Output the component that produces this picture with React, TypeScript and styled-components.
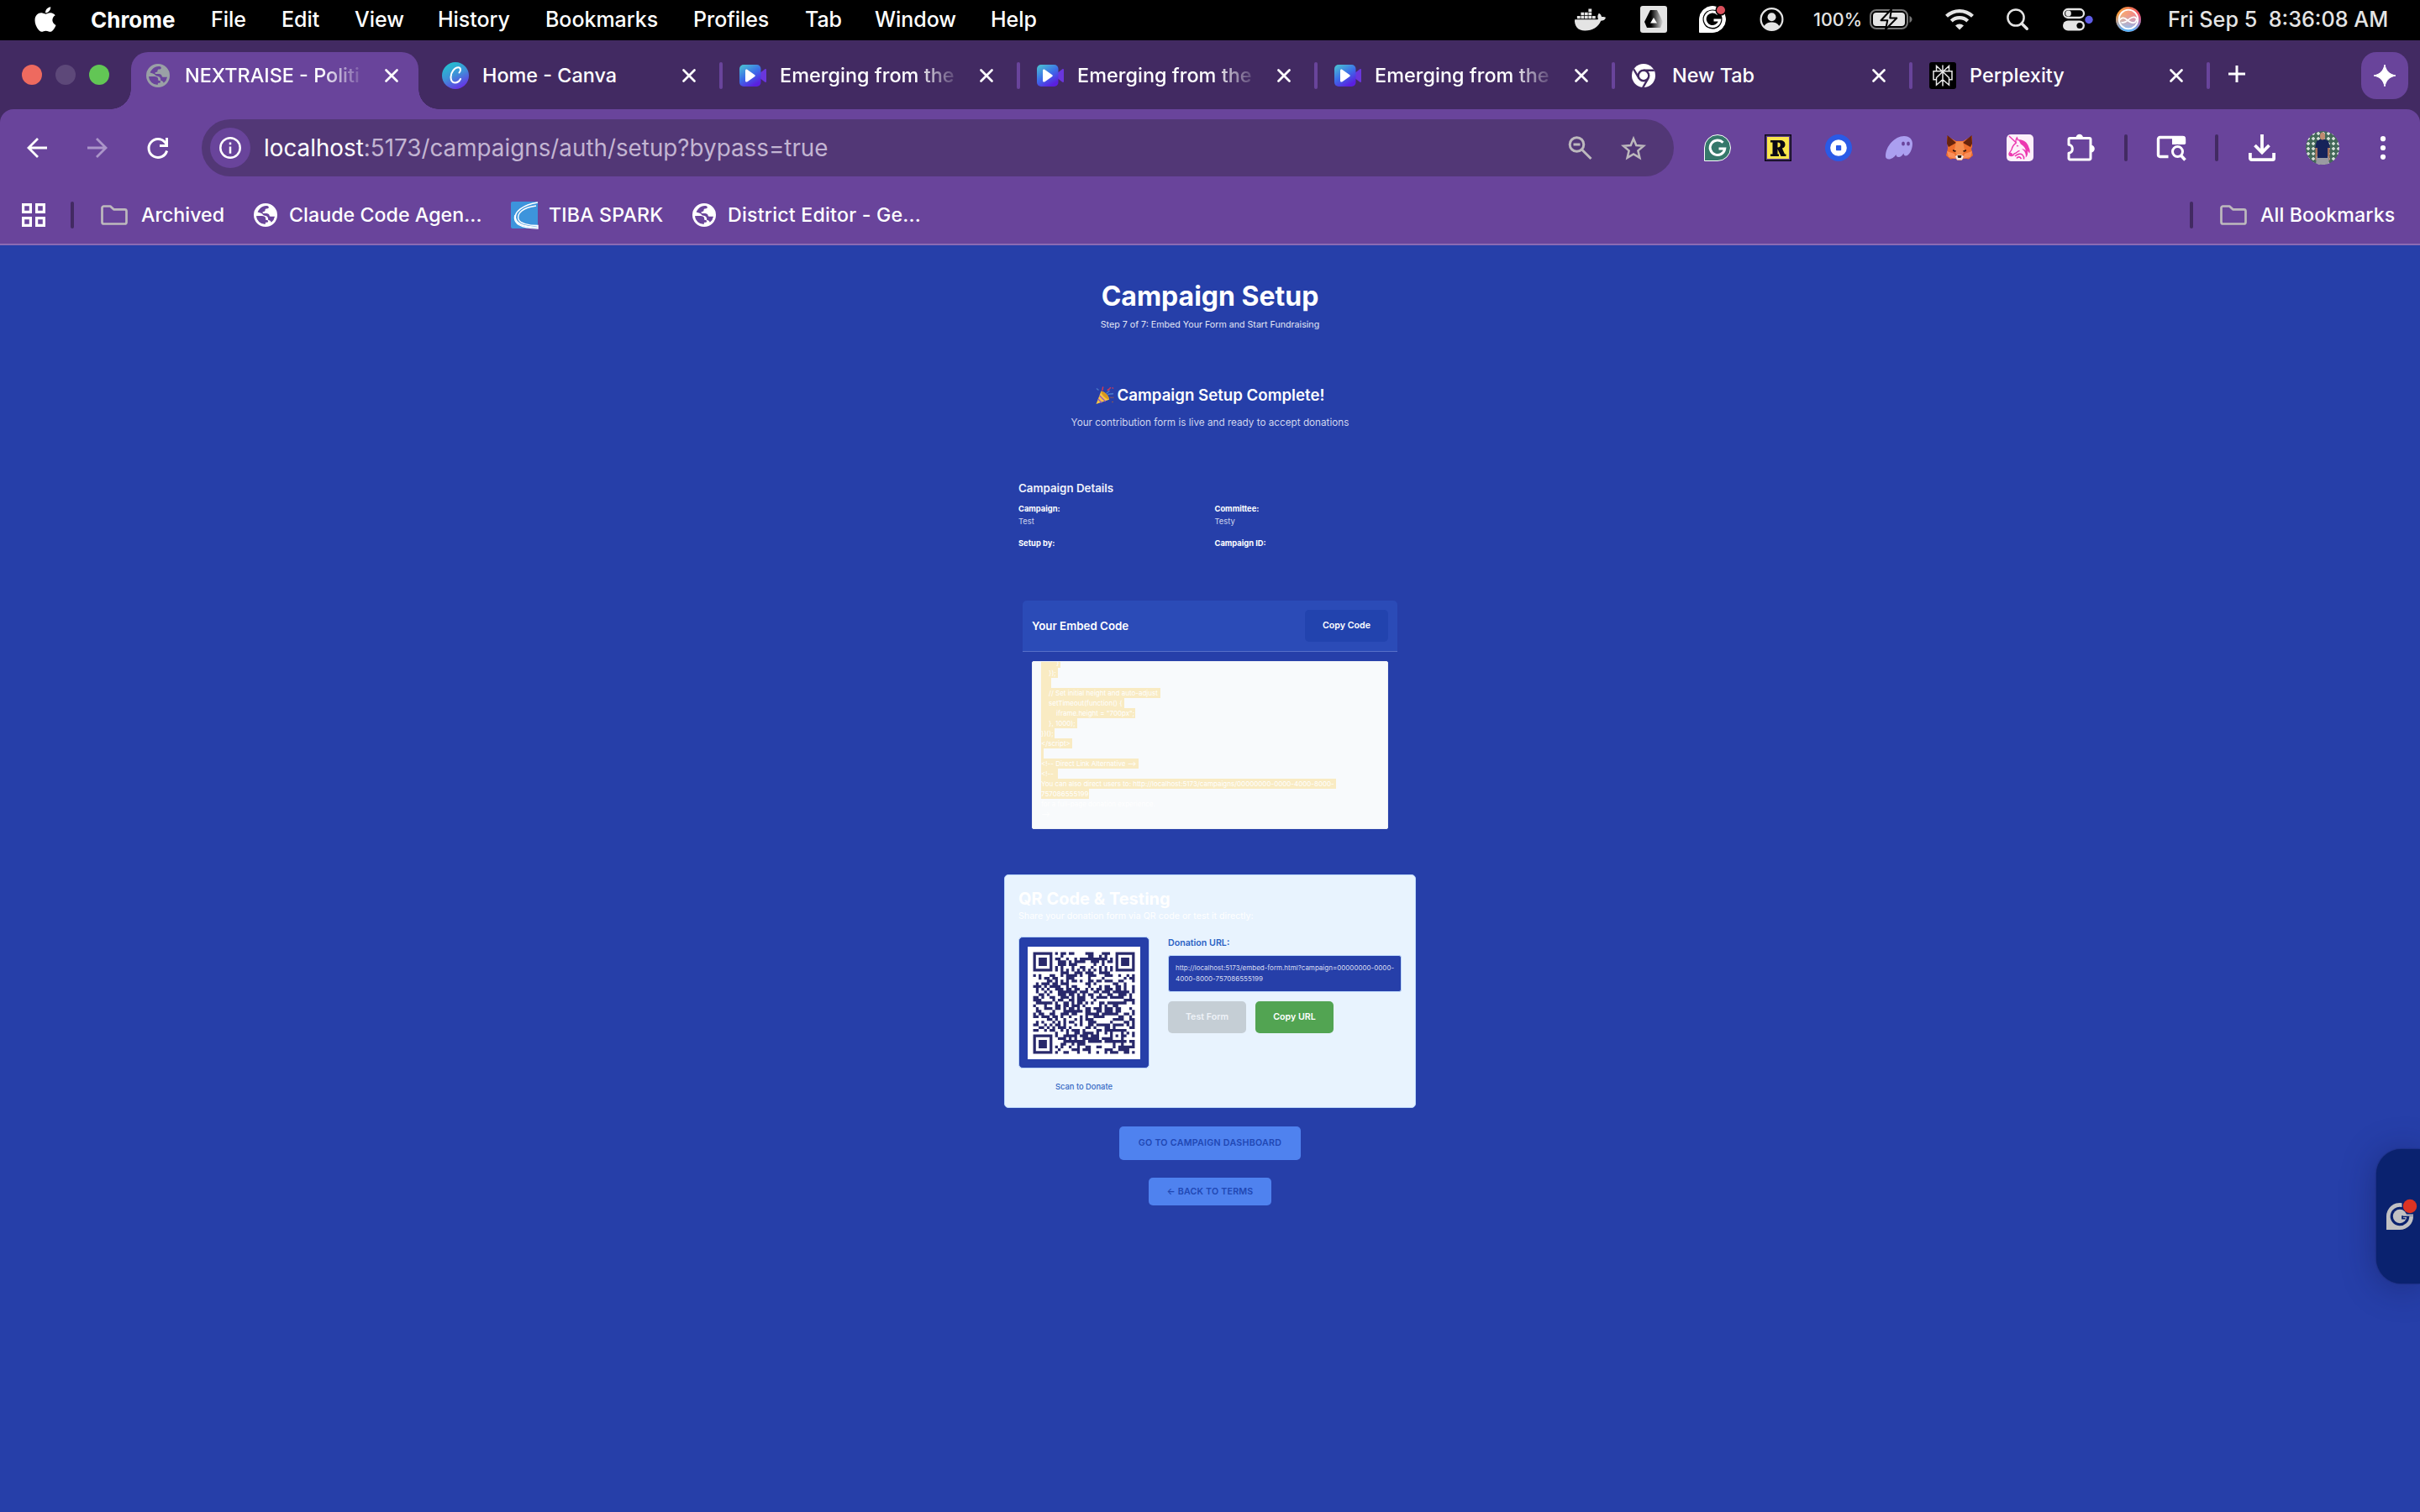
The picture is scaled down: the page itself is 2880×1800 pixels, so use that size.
import React from "react";
import styled, { createGlobalStyle } from "styled-components";
import { FaApple, FaDocker } from "react-icons/fa";

const URL_TEXT = "http://localhost:5173/embed-form.html?campaign=";
const ID_HEAD = "00000000-0000-4000-8000-";
const ID_TAIL = "757086555199";

/* ---------- QR code (version 5, level M, mask 1) ---------- */
const ALNUM = "0123456789ABCDEFGHIJKLMNOPQRSTUVWXYZ $%*+-./:";
const SIZE = 37;
const FORMAT = 0b101000100100101;

function buildBits(): number[] {
  const bits: number[] = [];
  const put = (v: number, n: number) => {
    for (let i = n - 1; i >= 0; i--) bits.push((v >> i) & 1);
  };
  put(4, 4);
  put(URL_TEXT.length, 8);
  for (const c of URL_TEXT) put(c.charCodeAt(0), 8);
  put(2, 4);
  put(ID_HEAD.length, 9);
  for (let i = 0; i < ID_HEAD.length; i += 2)
    put(ALNUM.indexOf(ID_HEAD[i]) * 45 + ALNUM.indexOf(ID_HEAD[i + 1]), 11);
  put(1, 4);
  put(ID_TAIL.length, 10);
  for (let i = 0; i < ID_TAIL.length; i += 3) put(Number(ID_TAIL.slice(i, i + 3)), 10);
  put(0, 4);
  while (bits.length % 8) bits.push(0);
  let pad = 0xec;
  while (bits.length < 86 * 8) {
    put(pad, 8);
    pad = pad === 0xec ? 0x11 : 0xec;
  }
  return bits;
}

function gmul(a: number, b: number) {
  let r = 0;
  while (b) {
    if (b & 1) r ^= a;
    a <<= 1;
    if (a & 256) a ^= 0x11d;
    b >>= 1;
  }
  return r;
}

function ecc(data: number[], n: number): number[] {
  let gen = [1];
  let root = 1;
  for (let i = 0; i < n; i++) {
    const next = new Array(gen.length + 1).fill(0);
    gen.forEach((g, j) => {
      next[j] ^= g;
      next[j + 1] ^= gmul(g, root);
    });
    gen = next;
    root = gmul(root, 2);
  }
  const rem = [...data, ...new Array(n).fill(0)];
  for (let i = 0; i < data.length; i++) {
    const f = rem[i];
    if (f) gen.forEach((g, j) => (rem[i + j] ^= gmul(g, f)));
  }
  return rem.slice(data.length);
}

function makeQr(): boolean[][] {
  const bits = buildBits();
  const bytes: number[] = [];
  for (let i = 0; i < bits.length; i += 8) bytes.push(parseInt(bits.slice(i, i + 8).join(""), 2));
  const blocks = [bytes.slice(0, 43), bytes.slice(43)];
  const eccs = blocks.map((b) => ecc(b, 24));
  const out: number[] = [];
  for (let i = 0; i < 43; i++) blocks.forEach((b) => out.push(b[i]));
  for (let i = 0; i < 24; i++) eccs.forEach((b) => out.push(b[i]));
  const m: (boolean | null)[][] = Array.from({ length: SIZE }, () => new Array(SIZE).fill(null));
  const finder = (r0: number, c0: number) => {
    for (let r = -1; r <= 7; r++)
      for (let c = -1; c <= 7; c++) {
        const y = r0 + r;
        const x = c0 + c;
        if (y < 0 || x < 0 || y >= SIZE || x >= SIZE) continue;
        const d = Math.max(Math.abs(r - 3), Math.abs(c - 3));
        m[y][x] = d !== 2 && d !== 4;
      }
  };
  finder(0, 0);
  finder(0, SIZE - 7);
  finder(SIZE - 7, 0);
  for (let r = -2; r <= 2; r++)
    for (let c = -2; c <= 2; c++) m[30 + r][30 + c] = Math.max(Math.abs(r), Math.abs(c)) !== 1;
  for (let i = 8; i < SIZE - 8; i++) {
    m[6][i] = i % 2 === 0;
    m[i][6] = i % 2 === 0;
  }
  for (let i = 0; i < 15; i++) {
    const b = ((FORMAT >> i) & 1) === 1;
    if (i < 6) m[i][8] = b;
    else if (i < 8) m[i + 1][8] = b;
    else m[SIZE - 15 + i][8] = b;
    if (i < 8) m[8][SIZE - i - 1] = b;
    else if (i < 9) m[8][7] = b;
    else m[8][14 - i] = b;
  }
  m[SIZE - 8][8] = true;
  let k = 0;
  let up = true;
  for (let col = SIZE - 1; col > 0; col -= 2) {
    if (col === 6) col--;
    for (let i = 0; i < SIZE; i++) {
      const row = up ? SIZE - 1 - i : i;
      for (const x of [col, col - 1]) {
        if (m[row][x] !== null) continue;
        const bit = k < out.length * 8 ? (out[k >> 3] >> (7 - (k & 7))) & 1 : 0;
        m[row][x] = (bit === 1) !== (row % 2 === 0);
        k++;
      }
    }
    up = !up;
  }
  return m as boolean[][];
}

const QR_PATH = makeQr()
  .map((row, y) => row.map((on, x) => (on ? `M${x + 2} ${y + 2}h1v1h-1z` : "")).join(""))
  .join("");

const QrSvg = () => (
  <svg width="134" height="134" viewBox="0 0 41 41">
    <rect width="41" height="41" fill="#fff" />
    <path d={QR_PATH} fill="#29296b" />
  </svg>
);

/* ---------- styles ---------- */
const Global = createGlobalStyle`
  * { box-sizing: border-box; }
  html, body { margin: 0; padding: 0; }
  body { font-family: Inter, "Liberation Sans", sans-serif; background: #263fa9; overflow: hidden; }
  svg { display: block; flex: none; overflow: visible; }
`;

const Screen = styled.div`
  width: 2880px;
  height: 1800px;
  display: flex;
  flex-direction: column;
  position: relative;
  overflow: hidden;
`;

const MenuBar = styled.header`
  height: 48px;
  background: #000;
  display: flex;
  align-items: center;
  padding: 0 38px 2px 37px;
  color: #fff;
  font-size: 25px;
`;
const MenuItem = styled.span<{ $w: number; $bold?: boolean }>`
  width: ${(p) => p.$w}px;
  font-size: ${(p) => (p.$bold ? 26 : 25)}px;
  font-weight: ${(p) => (p.$bold ? 700 : 500)};
  letter-spacing: ${(p) => (p.$bold ? 0 : -0.05)}px;
  white-space: nowrap;
`;
const AppleSlot = styled.span`
  width: 71px;
  display: flex;
`;
const Status = styled.div`
  margin-left: auto;
  display: flex;
  align-items: center;
  color: #e4e4e4;
`;
const StatusItem = styled.span<{ $w: number; $gap: number; $size?: number }>`
  width: ${(p) => p.$w}px;
  margin-left: ${(p) => p.$gap}px;
  font-size: ${(p) => p.$size ?? 25.2}px;
  font-weight: 500;
  white-space: pre;
  display: flex;
`;

const TabStrip = styled.div`
  height: 82px;
  background: #422a62;
  display: flex;
  padding-right: 14px;
`;
const Lights = styled.div`
  width: 150px;
  padding: 29px 0 0 26px;
  display: flex;
  gap: 16px;
`;
const Light = styled.i<{ $c: string }>`
  width: 24px;
  height: 24px;
  border-radius: 50%;
  background: ${(p) => p.$c};
`;
const Tab = styled.div<{ $active?: boolean }>`
  width: 354px;
  height: 68px;
  margin-top: 14px;
  display: flex;
  align-items: center;
  position: relative;
  padding: 0 0 12px 22px;
  ${(p) =>
    p.$active &&
    `
    width: 342px; margin-left: 6px; margin-right: 6px; padding-left: 18px;
    background: #69449b; border-radius: 20px 20px 0 0;
    &::before, &::after {
      content: ""; position: absolute; bottom: 0; width: 24px; height: 24px;
    }
    &::before { left: -24px; background: radial-gradient(circle at 0 0, transparent 23.5px, #69449b 24px); }
    &::after { right: -24px; background: radial-gradient(circle at 100% 0, transparent 23.5px, #69449b 24px); }
  `}
`;
const Fav = styled.span<{ $w?: number }>`
  width: ${(p) => p.$w ?? 32}px;
  display: flex;
`;
const TabTitle = styled.span<{ $fade?: boolean; $ml?: number; $ls?: number }>`
  margin-left: ${(p) => p.$ml ?? 16}px;
  font-size: 23.4px;
  font-weight: 500;
  line-height: 32px;
  color: #fff;
  letter-spacing: ${(p) => p.$ls ?? 0}px;
  white-space: nowrap;
  ${(p) => p.$fade && `mask-image: linear-gradient(90deg, #000 calc(100% - 46px), rgba(0,0,0,.15));`}
`;
const TabClose = styled.span<{ $mr?: number }>`
  margin-left: auto;
  margin-right: ${(p) => p.$mr ?? 30}px;
  display: flex;
`;
const Sep = styled.i`
  width: 4px;
  height: 32px;
  margin: 26px -2px 0;
  border-radius: 2px;
  background: #69449b;
`;
const PlusSlot = styled.span`
  margin: 30px 0 0 24px;
  display: flex;
`;
const SparkButton = styled.span`
  margin: 14px 0 0 auto;
  width: 56px;
  height: 56px;
  border-radius: 18px;
  background: #69449b;
  display: grid;
  place-items: center;
`;

const ToolbarBack = styled.div`
  background: #422a62;
`;
const Toolbar = styled.div`
  height: 92px;
  background: #69449b;
  border-radius: 16px 16px 0 0;
  display: flex;
  align-items: center;
  padding-left: 8px;
`;
const Slot = styled.span<{ $w?: number }>`
  width: ${(p) => p.$w ?? 72}px;
  height: 40px;
  display: grid;
  place-items: center;
`;
const Omnibox = styled.div`
  width: 1752px;
  height: 68px;
  margin-left: 16px;
  margin-right: 16px;
  border-radius: 34px;
  background: #523776;
  display: flex;
  align-items: center;
  padding: 0 33px 0 10px;
`;
const InfoChip = styled.span`
  width: 48px;
  height: 48px;
  border-radius: 50%;
  background: #69449b;
  display: grid;
  place-items: center;
`;
const Address = styled.span`
  margin-left: 16px;
  font-size: 27.8px;
  color: #c3b5d2;
  white-space: nowrap;
  flex: 1;
  b { color: #fff; font-weight: 400; }
`;
const OmniIcons = styled.span`
  display: flex;
  gap: 34px;
  align-items: center;
`;
const VLine = styled.i`
  width: 4px;
  height: 32px;
  border-radius: 2px;
  background: #422a62;
`;
const Bookmarks = styled.div`
  height: 70px;
  background: #69449b;
  border-bottom: 2px solid #8b6ab3;
  display: flex;
  align-items: center;
  padding: 0 30px 1px 26px;
  color: #fff;
  font-size: 23.2px;
  font-weight: 500;
`;
const Mark = styled.span<{ $gap: number; $w?: number; $inner?: number; $ls?: number }>`
  margin-left: ${(p) => p.$gap}px;
  width: ${(p) => (p.$w ? `${p.$w}px` : "auto")};
  letter-spacing: ${(p) => p.$ls ?? 0}px;
  display: flex;
  align-items: center;
  gap: ${(p) => p.$inner ?? 14}px;
  white-space: nowrap;
`;
const PushRight = styled.span`
  margin-left: auto;
  display: flex;
  align-items: center;
`;

const Page = styled.main`
  flex: 1;
  background: #263fa9;
  display: flex;
  flex-direction: column;
  align-items: center;
  color: #fff;
  padding-top: 41px;
`;
const Line = styled.div<{ $h: number; $mt?: number; $s: number; $w?: number; $c?: string }>`
  height: ${(p) => p.$h}px;
  line-height: ${(p) => p.$h}px;
  margin-top: ${(p) => p.$mt ?? 0}px;
  font-size: ${(p) => p.$s}px;
  font-weight: ${(p) => p.$w ?? 400};
  color: ${(p) => p.$c ?? "#fff"};
  white-space: nowrap;
`;
const Heading = styled(Line)`
  display: flex;
  align-items: center;
  gap: 4px;
`;
const Details = styled.section`
  width: 456px;
  margin-top: 60px;
`;
const DetailGrid = styled.div`
  display: grid;
  grid-template-columns: 1fr 1fr;
  column-gap: 11px;
  grid-template-rows: 41px 14px;
  margin-top: 8px;
`;
const EmbedHead = styled.section`
  width: 446px;
  height: 61px;
  margin-top: 61px;
  background: #2b4bb7;
  border-bottom: 1px solid #5770c8;
  border-radius: 5px 5px 0 0;
  display: flex;
  align-items: center;
  justify-content: space-between;
  padding: 0 11px;
`;
const Button = styled.button<{ $w: number; $h?: number; $bg: string; $fg?: string; $ls?: number; $mt?: number }>`
  width: ${(p) => p.$w}px;
  height: ${(p) => p.$h ?? 38}px;
  margin: ${(p) => p.$mt ?? 0}px 0 0;
  padding: 0 0 1px;
  border: 0;
  border-radius: 5px;
  background: ${(p) => p.$bg};
  color: ${(p) => p.$fg ?? "#fff"};
  font: 600 10.67px Inter, sans-serif;
  letter-spacing: ${(p) => p.$ls ?? 0}px;
  white-space: nowrap;
`;
const CodeBox = styled.div`
  width: 424px;
  height: 200px;
  margin-top: 11px;
  border-radius: 2px;
  border: 1px solid #eef0f5;
  background: #f8fafc;
  padding: 0 10px 11px;
  display: flex;
  flex-direction: column;
  justify-content: flex-end;
  overflow: hidden;
`;
const CodeLine = styled.div`
  font-size: 8px;
  line-height: 12px;
  height: 12px;
  color: #fff;
  white-space: pre;
  flex: none;
  display: flex;
`;
const Sel = styled.span<{ $w: number }>`
  width: ${(p) => p.$w}px;
  background: #f9ebc3;
`;
const Card = styled.section`
  width: 490px;
  height: 278px;
  margin-top: 54px;
  background: #e8f3fe;
  border: 1px solid #bbd6fa;
  border-radius: 5px;
  padding: 16px;
`;
const CardBody = styled.div`
  display: flex;
  gap: 22px;
  margin-top: 15px;
`;
const QrCol = styled.div`
  width: 156px;
  display: flex;
  flex-direction: column;
  align-items: center;
`;
const QrFrame = styled.div`
  width: 156px;
  height: 157px;
  border: 1px solid #bbd6fa;
  border-radius: 5px;
  background: #263fa9;
  display: grid;
  place-items: center;
`;
const UrlCol = styled.div`
  width: 278px;
`;
const UrlBox = styled.div`
  width: 278px;
  height: 44px;
  margin-top: 6px;
  border: 1px solid #bbd6fa;
  border-radius: 3px;
  background: #263fa9;
  color: #d9def1;
  font-size: 8px;
  line-height: 12.8px;
  padding: 8px;
  white-space: nowrap;
`;
const Row = styled.div`
  display: flex;
  gap: 11px;
  margin-top: 11px;
`;
const Assistant = styled.aside`
  position: absolute;
  right: 0;
  top: 1368px;
  width: 52px;
  height: 160px;
  border-radius: 30px 0 0 30px;
  background: #0a226f;
  box-shadow: 0 4px 40px rgba(20, 25, 80, 0.45), 0 0 2px rgba(10, 20, 60, 0.7);
  padding: 64px 0 0 12px;
`;

/* ---------- icons ---------- */
const Globe = ({ c }: { c: string }) => (
  <svg width="28" height="28" viewBox="0 0 28 28">
    <path
      fillRule="evenodd"
      fill={c}
      d="M14 0a14 14 0 1 1 0 28a14 14 0 0 1 0-28zM2.900 15.200c3.500-.2 7.500-.2 9.300.2c1.600.5 2 1.600 2 3.300c0 .8.300 1.300 1.200 1.300c1.200 0 1.600.5 1.600 1.500c0 1-.6 1.300-2 1.300c-1 0-1.300.6-1.300 2.300A11.100 11.100 0 0 1 2.900 15.200zM4.600 10.600C6 7 9.500 3.200 14.500 2.900c1.800 0 3 .4 3.300 1.600c.2 1.400-.9 2-2.500 2c-1.300 0-1.800.6-1.800 1.800c0 1-.6 1.600-1.800 1.600c-1 0-1.300.4-1.100 1.300c.2.8.8.9 2.700.9c3.500 0 5 .6 5.300 2.300c.2 1 .8 1.300 2.300 1.300h4.100a11.100 11.100 0 0 1-4.200 7c-.7-1.700-1.600-2.700-3.500-2.700c0-3.500-1.300-4.900-3.900-5.200c-2.500-.3-2.900-2.700-5.500-3.200z"
    />
  </svg>
);
const Cross = () => (
  <svg width="16" height="16" viewBox="0 0 16 16" stroke="#fff" strokeWidth="2.700" strokeLinecap="round">
    <path d="M1.500 1.500l13 13M14.500 1.500l-13 13" />
  </svg>
);
const Canva = () => (
  <svg width="32" height="32" viewBox="0 0 32 32">
    <defs>
      <linearGradient id="cv" x1=".2" y1="0" x2=".7" y2="1">
        <stop offset="0" stopColor="#21c6cf" />
        <stop offset=".5" stopColor="#3f8fd8" />
        <stop offset="1" stopColor="#6a2be6" />
      </linearGradient>
    </defs>
    <circle cx="16" cy="16" r="16" fill="url(#cv)" />
    <path d="M20.500 12.500c1.800-1.500 2.500-6-1-6.200c-4.500-.2-9 6-9 11.500c0 4.500 2.300 6.600 5 6.600c3 0 5.400-2 6.500-4.400" fill="none" stroke="#fff" strokeWidth="2" strokeLinecap="round" />
  </svg>
);
const Video = () => (
  <svg width="32" height="26" viewBox="0 0 32 26">
    <defs>
      <linearGradient id="vd" x1="0" y1="0" x2=".6" y2="1">
        <stop offset="0" stopColor="#4cc8d0" />
        <stop offset=".55" stopColor="#3c6fe8" />
        <stop offset="1" stopColor="#5a1fe0" />
      </linearGradient>
    </defs>
    <path d="M23 11l7-5.500c1-.8 2-.5 2 .8v13.500c0 1.300-1 1.600-2 .8L23 15z" fill="#6a36dc" />
    <rect width="25.500" height="26" rx="5" fill="url(#vd)" />
    <path d="M7 7.300c0-1.600 1.200-2.200 2.500-1.300l8.500 6c1 .7 1 1.500 0 2.200l-8.500 6c-1.300.9-2.500.2-2.500-1.300z" fill="#fff" />
  </svg>
);
const ChromeLogo = () => (
  <svg width="28" height="28" viewBox="0 0 28 28">
    <defs>
      <clipPath id="cl"><circle cx="14" cy="14" r="14" /></clipPath>
    </defs>
    <g clipPath="url(#cl)">
      <rect width="28" height="28" fill="#fff" />
      <circle cx="14" cy="14" r="6.300" fill="none" stroke="#422a62" strokeWidth="2.400" />
      <path d="M14 7.700h14M8.500 17.200L2 6M19.500 17.200L13 28.500" stroke="#422a62" strokeWidth="2.400" />
    </g>
  </svg>
);
const Perplexity = () => (
  <svg width="32" height="32" viewBox="0 0 32 32" fill="none" stroke="#e8e8e8" strokeWidth="1.500">
    <rect width="32" height="32" rx="3" fill="#000" stroke="none" />
    <path d="M16 3.500v25M8.500 10.800V4.500l7.500 7l7.500-7v6.300M8.500 10.800h15M8.500 10.800H5v10h3.500M23.500 10.800H27v10h-3.500M16 11.300l-7.500 7.200v8.700l7.500-6.500l7.500 6.500v-8.700z" />
  </svg>
);
const Folder = () => (
  <svg width="32" height="24" viewBox="0 0 32 24">
    <path d="M3.500 1.500h7.800l4 3.800h13.200a2 2 0 0 1 2 2v13.200a2 2 0 0 1-2 2h-25a2 2 0 0 1-2-2v-17a2 2 0 0 1 2-2z" fill="none" stroke="#bdb9bd" strokeWidth="2.700" strokeLinejoin="round" />
  </svg>
);
const GDrop = ({ drop, hole, edge, badge }: { drop: string; hole: string; edge?: string; badge?: string }) => (
  <svg width="32" height="32" viewBox="0 0 32 32" fill="none">
    <path d="M.5 31.500V16A15.500 15.500 0 1 1 16 31.500z" fill={drop} stroke={edge ?? drop} />
    <circle cx="16" cy="16" r="11.500" fill={hole} />
    <path d="M22.500 9.800A8.800 8.800 0 1 0 24.700 17H17.500" stroke="#fff" strokeWidth="3" />
    {badge && <circle cx="26" cy="5" r="5.800" fill={badge} stroke={hole} strokeWidth="1.500" />}
  </svg>
);
const GFloat = () => (
  <svg width="32" height="32" viewBox="0 0 32 32" fill="none">
    <path d="M0 32V16A16 16 0 0 1 18.500.2V5A11.300 11.300 0 1 0 27.300 16H32A16 16 0 0 1 16 32z" fill="#c1c1c3" />
    <circle cx="16" cy="16" r="8.200" fill="#c1c1c3" />
    <path d="M26 16.200h-7v2.400h3.500" stroke="#0a226f" strokeWidth="1.800" />
    <path d="M20 14.600h12" stroke="#c1c1c3" strokeWidth="2" />
    <circle cx="28" cy="4" r="8.200" fill="#dc3323" />
  </svg>
);

const StatusIcons = {
  drive: (
    <svg width="32" height="32" viewBox="0 0 32 32">
      <defs>
        <linearGradient id="dr">
          <stop offset=".35" stopColor="#000" />
          <stop offset="1" stopColor="#dcdcdc" />
        </linearGradient>
      </defs>
      <rect width="32" height="32" rx="3" fill="#e3e3e3" />
      <path d="M12 5h8l7 14-3 7H8l-3-7z" fill="url(#dr)" />
      <path d="M16 14l4 6.500h-8z" fill="#fff" />
    </svg>
  ),
  user: (
    <svg width="29" height="28" viewBox="0 0 28 28">
      <circle cx="14" cy="14" r="12.900" fill="none" stroke="#e4e4e4" strokeWidth="2.200" />
      <circle cx="14" cy="11.200" r="5" fill="#e4e4e4" />
      <path d="M4.800 22.500c2-4 5.400-5 9.200-5s7.200 1 9.200 5a12.500 12.500 0 0 1-18.400 0z" fill="#e4e4e4" />
    </svg>
  ),
  battery: (
    <svg width="51" height="26" viewBox="0 0 51 26">
      <rect x="1" y="2" width="44" height="22" rx="7" fill="none" stroke="#767676" strokeWidth="2" />
      <rect x="4" y="5" width="38" height="16" rx="4" fill="#e4e4e4" />
      <path d="M47.500 9c4 1.500 4 6.500 0 8z" fill="#767676" />
      <path d="M26 1L13.500 14.200h7.800L19 25l13.300-13.500h-8z" fill="#e4e4e4" stroke="#000" strokeWidth="2" strokeLinejoin="round" />
    </svg>
  ),
  wifi: (
    <svg width="34" height="26" viewBox="0 0 34 26" fill="none" stroke="#e4e4e4" strokeWidth="4.200">
      <path d="M1.500 9.300a22.500 22.500 0 0 1 31 0M7.300 15a14 14 0 0 1 19.400 0" />
      <path d="M17 25.500l-5-5a7.200 7.200 0 0 1 10 0z" fill="#e4e4e4" stroke="none" />
    </svg>
  ),
  search: (
    <svg width="26" height="26" viewBox="0 0 26 26" fill="none" stroke="#e4e4e4">
      <circle cx="11" cy="11" r="9.600" strokeWidth="2.500" />
      <path d="M18 18l6.300 6.300" strokeWidth="3.400" strokeLinecap="round" />
    </svg>
  ),
  control: (
    <svg width="37" height="28" viewBox="0 0 37 28">
      <rect x="2" y="2" width="24" height="10" rx="5" fill="none" stroke="#e4e4e4" strokeWidth="2.300" />
      <circle cx="7.500" cy="7" r="3.400" fill="#e4e4e4" />
      <rect x="1" y="15.500" width="26" height="12" rx="6" fill="#e4e4e4" />
      <circle cx="21" cy="21.500" r="3.600" fill="#000" />
      <circle cx="32" cy="14.500" r="4.700" fill="#5e5ce6" />
    </svg>
  ),
  siri: (
    <svg width="30" height="30" viewBox="0 0 30 30">
      <defs>
        <linearGradient id="si" x1="0" y1=".1" x2="1" y2=".4">
          <stop offset="0" stopColor="#f6a636" />
          <stop offset="1" stopColor="#ec4a6c" />
        </linearGradient>
        <linearGradient id="sj" x1="0" y1="0" x2="0" y2="1">
          <stop offset=".3" stopColor="#7fa8ff" stopOpacity="0" />
          <stop offset=".95" stopColor="#56b4fa" />
        </linearGradient>
      </defs>
      <circle cx="15" cy="15" r="15" fill="url(#si)" />
      <circle cx="15" cy="15" r="15" fill="url(#sj)" />
      <circle cx="15" cy="15" r="11.300" fill="#fff" fillOpacity=".25" stroke="#fff" strokeWidth="1.800" />
      <path d="M4.500 16c2-3 5-3.500 8-1s6 5 9 4s4-4.500 2-6s-6 0-8.500 2.500s-5.500 4-8.500 3" fill="none" stroke="#fff" strokeWidth="1.700" />
    </svg>
  ),
};

const Ext = {
  r: (
    <svg width="32" height="32" viewBox="0 0 32 32">
      <rect width="32" height="32" fill="#0b0714" />
      <rect x="1.500" y="1.500" width="29" height="29" fill="#5b3f86" />
      <rect x="3" y="3" width="26" height="26" fill="#fbe64b" />
      <path d="M7 7h11c4.500 0 6.500 2 6.500 5c0 2.500-1.300 4-3.600 4.600L24 23.500h1.500V26h-6L15.500 17.500V23.500H17V26H7v-2.500h2.500v-14H7zM15.500 9.500v6c2.500 0 3.300-1 3.300-3s-.8-3-3.300-3z" fill="#0b0714" fillRule="evenodd" />
    </svg>
  ),
  coin: (
    <svg width="32" height="32" viewBox="0 0 32 32">
      <circle cx="16" cy="16" r="16" fill="#2a5ae6" />
      <circle cx="16" cy="16" r="9.800" fill="#fff" />
      <rect x="13" y="13" width="6.200" height="6.200" rx=".8" fill="#2a5ae6" />
    </svg>
  ),
  ghost: (
    <svg width="32" height="28" viewBox="0 0 32 28">
      <path d="M0 24C0 12 11 0 22 0c7 0 10 4.500 10 9c0 7-4 14.500-8 14.500c-2 0-2.500-1.500-2.500-3c-1.500 2.500-3.500 4.500-6 4.500c-2 0-3-1-3-3C10.500 25 7 27.500 4 27.500C1.500 27.500 0 26 0 24z" fill="#ab9ff0" />
      <ellipse cx="21" cy="9" rx="1.900" ry="2.600" fill="#69449b" />
      <ellipse cx="27" cy="9" rx="1.900" ry="2.600" fill="#69449b" />
    </svg>
  ),
  fox: (
    <svg width="32" height="30" viewBox="0 0 32 30">
      <path d="M1 1l11 6h8l11-6v13l-1 2l2 8l-5 4.500l-6-1l-3 2.500h-4l-3-2.500l-6 1L0 24l2-8z" fill="#ee6d2d" />
      <path d="M1.500 0L12 9L3 14L1 10zM30.500 0L20 9l9 5l2-4z" fill="#67230c" />
      <path d="M12 7.500h8L22 17l-3 8h-6l-3-8z" fill="#f58d4f" />
      <path d="M1 19l9 3l2 6l-9-2zM31 19l-9 3l-2 6l9-2z" fill="#fb8f5a" />
      <path d="M8 17l4 1.500l-1 1.500l-3-1zM24 17l-4 1.500l1 1.500l3-1z" fill="#3a1a10" />
      <path d="M11 25l2.500-1.500h5L21 25l-2 4.500h-6z" fill="#f4ece8" />
      <path d="M13.500 24h5l-.8 3h-3.400z" fill="#241612" />
    </svg>
  ),
  unicorn: (
    <svg width="32" height="32" viewBox="0 0 32 32">
      <rect width="32" height="32" rx="5" fill="#fdeffa" />
      <path d="M3 2l9 8.500M11 9c0-2 .3-3.500 1.300-5l1.700 3.500" fill="none" stroke="#ec38b0" strokeWidth="1.400" />
      <path d="M14 6c6 0 11 3.500 12.500 9.500c1.500 3 1.500 5 .8 7l-2.500-3c1 4 0 6-2 8c.5-5-1.500-8-5-10.500c3 .5 4 1.500 5 2.500c-.5-4-3-6-6-8z" fill="#ec38b0" />
      <path d="M11 10.500c-3 1.500-4 4-5 7.500c-1 2.500-2.500 3-3 5c0 1.500 1 2.500 2.500 2.500s3-1 3.500-2.500c3.500-1 4-3.500 6.500-3.500" fill="none" stroke="#ec38b0" strokeWidth="1.400" />
      <path d="M3.500 21.500c2 0 3.500 1 4 2.500c-1 1.500-3 1.800-4 .5zM12 12.500l3 1.500l-3 .5z" fill="#ec38b0" />
      <path d="M10 26c3-3 7-3.500 9-1.500c1.500 1.500 2 3 1.500 5M12 28.500c2-2.500 4-2 5.500.6" fill="none" stroke="#ec38b0" strokeWidth="1.600" />
    </svg>
  ),
  puzzle: (
    <svg width="34" height="34" viewBox="0 0 34 34">
      <path d="M4.500 5.500h23a1.500 1.500 0 0 1 1.500 1.500v22.500a1.500 1.500 0 0 1-1.500 1.500h-23A1.500 1.500 0 0 1 3 29.500v-6.200c5.800-.5 5.800-9.600 0-10.100V7a1.500 1.500 0 0 1 1.500-1.500z" fill="none" stroke="#fff" strokeWidth="3" strokeLinejoin="round" />
      <path d="M11.500 5a4.300 4.300 0 0 1 8.600 0zM29.500 13.800a4.300 4.300 0 0 1 0 8.600z" fill="#fff" />
    </svg>
  ),
  panel: (
    <svg width="36" height="32" viewBox="0 0 36 32">
      <path d="M14.500 26.500H4.500a2 2 0 0 1-2-2V5.500a2 2 0 0 1 2-2h27a2 2 0 0 1 2 2V11" fill="none" stroke="#fff" strokeWidth="3.400" />
      <path d="M19 2h13.500a2 2 0 0 1 2 2v8H19z" fill="#fff" />
      <circle cx="25" cy="20.500" r="6.800" fill="#69449b" stroke="#69449b" strokeWidth="4" />
      <circle cx="25.500" cy="20.500" r="6" fill="none" stroke="#fff" strokeWidth="3" />
      <path d="M29.500 25l5 5.500" stroke="#fff" strokeWidth="3.600" />
    </svg>
  ),
  download: (
    <svg width="32" height="32" viewBox="0 0 32 32" fill="none" stroke="#fff" strokeWidth="3.800">
      <path d="M16 0v21M7.500 13l8.500 8.500l8.500-8.500M1.900 22v6.500a1.600 1.600 0 0 0 1.600 1.600h25a1.600 1.600 0 0 0 1.600-1.600V22" />
    </svg>
  ),
  avatar: (
    <svg width="40" height="40" viewBox="0 0 40 40">
      <defs>
        <clipPath id="av"><circle cx="20" cy="20" r="20" /></clipPath>
        <pattern id="pt" width="6" height="6" patternUnits="userSpaceOnUse">
          <rect width="6" height="6" fill="#44695a" />
          <path d="M3 1v4M1 3h4" stroke="#dfe7e0" strokeWidth="1.500" />
        </pattern>
      </defs>
      <g clipPath="url(#av)">
        <rect width="40" height="40" fill="url(#pt)" />
        <path d="M11.500 18h2.500v17h-2.500zM26 18h2.500v17H26z" fill="#a8745c" />
        <path d="M13 30h14l1 10H12z" fill="#9a9aa2" />
        <path d="M13 12l5-2.500h4l5 2.500l2 8h-3v12H14V20h-3z" fill="#16235a" />
        <ellipse cx="20" cy="6" rx="3" ry="4.500" fill="#c08a70" />
      </g>
    </svg>
  ),
};

const PartyPopper = () => (
  <svg width="22" height="22" viewBox="0 0 22 22" fill="none">
    <path d="M.5 21L6.500 5.500c4 .5 9 5.500 9.500 10.300z" fill="#f5c443" />
    <path d="M2.800 15l4.400 4.400M4.600 11l7 7" stroke="#9a5bbd" strokeWidth="1.400" />
    <ellipse cx="11.200" cy="10.600" rx="2.100" ry="6.200" transform="rotate(-45 11.200 10.600)" fill="#d8961f" />
    <path d="M7.500 5c1.500-1.500 0-3 1.500-4.500M14 5c1-2 3-1 3.500-4M19.500 1.500l1.500 1" stroke="#d23a55" strokeWidth="1.500" />
    <path d="M14 10c2-1.500 4-.5 7-1.500M1 2.500l2.500 2M12.500 8.500l4-3.500" stroke="#4b79c9" strokeWidth="1.400" />
    <path d="M17.500 13.500l1.500-.4M19.500 18l1 1M20 13l1 .6" stroke="#9c5a48" strokeWidth="1.500" />
  </svg>
);

/* ---------- data ---------- */
const MENUS: [string, number][] = [
  ["File", 84],
  ["Edit", 87],
  ["View", 99],
  ["History", 128],
  ["Bookmarks", 176],
  ["Profiles", 133],
  ["Tab", 83],
  ["Window", 138],
  ["Help", 80],
];

const CODE: [string, number][] = [
  ["        }", 23],
  ["    });", 20],
  ["    ", 12],
  ["    // Set initial height and auto-adjust", 142],
  ["    setTimeout(function() {", 99],
  ['        iframe.height = "700px";', 112],
  ["    }, 1000);", 43],
  ["})();", 16],
  ["</script>", 37],
  ["", 3],
  ["<!-- Direct Link Alternative -->", 116],
  ["<!-- ", 20],
  ["You can also direct users to: http://localhost:5173/campaigns/00000000-0000-4000-8000-", 351],
  ["757086555199", 57],
  ["for a full-page donation experience.", 0],
  ["-->", 0],
];

export default function App() {
  return (
    <Screen>
      <Global />
      <MenuBar>
        <AppleSlot><FaApple size={34} /></AppleSlot>
        <MenuItem $w={143} $bold>Chrome</MenuItem>
        {MENUS.map(([t, w]) => (
          <MenuItem key={t} $w={w}>{t}</MenuItem>
        ))}
        <Status>
          <StatusItem $w={36} $gap={0}><FaDocker size={37} /></StatusItem>
          <StatusItem $w={32} $gap={42}>{StatusIcons.drive}</StatusItem>
          <StatusItem $w={32} $gap={38}><GDrop drop="#fff" hole="#000" badge="#d94f5c" /></StatusItem>
          <StatusItem $w={28} $gap={40}>{StatusIcons.user}</StatusItem>
          <StatusItem $w={57} $gap={36} $size={21.5}>100%</StatusItem>
          <StatusItem $w={51} $gap={10}>{StatusIcons.battery}</StatusItem>
          <StatusItem $w={34} $gap={39}>{StatusIcons.wifi}</StatusItem>
          <StatusItem $w={26} $gap={39}>{StatusIcons.search}</StatusItem>
          <StatusItem $w={37} $gap={40}>{StatusIcons.control}</StatusItem>
          <StatusItem $w={30} $gap={27}>{StatusIcons.siri}</StatusItem>
          <StatusItem $w={262} $gap={32}>Fri Sep 5  8:36:08 AM</StatusItem>
        </Status>
      </MenuBar>

      <TabStrip>
        <Lights><Light $c="#ee6a5f" /><Light $c="#5d4879" /><Light $c="#62c655" /></Lights>
        <Tab $active>
          <Fav $w={28}><Globe c="#9aa0a6" /></Fav>
          <TabTitle $ml={18} $fade>NEXTRAISE - Politi</TabTitle>
          <TabClose $mr={24}><Cross /></TabClose>
        </Tab>
        <Tab>
          <Fav><Canva /></Fav>
          <TabTitle>Home - Canva</TabTitle>
          <TabClose><Cross /></TabClose>
        </Tab>
        {[0, 1, 2].map((i) => (
          <React.Fragment key={i}>
            <Sep />
            <Tab>
              <Fav><Video /></Fav>
              <TabTitle $fade $ls={0.05}>Emerging from the</TabTitle>
              <TabClose><Cross /></TabClose>
            </Tab>
          </React.Fragment>
        ))}
        <Sep />
        <Tab>
          <Fav><ChromeLogo /></Fav>
          <TabTitle>New Tab</TabTitle>
          <TabClose><Cross /></TabClose>
        </Tab>
        <Sep />
        <Tab>
          <Fav><Perplexity /></Fav>
          <TabTitle $ls={0.05}>Perplexity</TabTitle>
          <TabClose><Cross /></TabClose>
        </Tab>
        <Sep />
        <PlusSlot>
          <svg width="20" height="20" viewBox="0 0 20 20" stroke="#fff" strokeWidth="3"><path d="M10 0v20M0 10h20" /></svg>
        </PlusSlot>
        <SparkButton>
          <svg width="26" height="26" viewBox="0 0 26 26"><path d="M13 0c1.500 7.500 5.500 11.500 13 13c-7.500 1.500-11.500 5.500-13 13c-1.500-7.500-5.500-11.500-13-13c7.500-1.500 11.500-5.500 13-13z" fill="#fff" stroke="#fff" /></svg>
        </SparkButton>
      </TabStrip>

      <ToolbarBack>
        <Toolbar>
          <Slot>
            <svg width="24" height="24" viewBox="0 0 24 24" fill="none" stroke="#fff" strokeWidth="2.800"><path d="M24 12H2M13 1L2 12l11 11" /></svg>
          </Slot>
          <Slot>
            <svg width="24" height="24" viewBox="0 0 24 24" fill="none" stroke="#ab95c9" strokeWidth="2.800"><path d="M0 12h22M11 1l11 11l-11 11" /></svg>
          </Slot>
          <Slot>
            <svg width="26" height="26" viewBox="0 0 26 26" fill="none" stroke="#fff" strokeWidth="3">
              <path d="M23.600 16.500A11 11 0 1 1 21.500 6.500L23.500 9" />
              <path d="M23.500 1v9.500H15" />
            </svg>
          </Slot>
          <Omnibox>
            <InfoChip>
              <svg width="26" height="26" viewBox="0 0 26 26" fill="none" stroke="#fff" strokeWidth="2.500"><circle cx="13" cy="13" r="11.700" /><path d="M13 11.500v8.300M13 6.500v2.700" /></svg>
            </InfoChip>
            <Address><b>localhost</b>:5173/campaigns/auth/setup?bypass=true</Address>
            <OmniIcons>
              <svg width="29" height="28" viewBox="0 0 28 28" fill="none" stroke="#bdb9bd" strokeWidth="3"><circle cx="10" cy="10" r="8.300" /><path d="M16.200 16.200L27 27M6 10h8" /></svg>
              <svg width="30" height="29" viewBox="0 0 30 29" fill="none" stroke="#bdb9bd" strokeWidth="2.500"><path d="M15 3l3.300 8l8.700.7l-6.600 5.700l2 8.500L15 21.400L7.600 25.900l2-8.500L3 11.700l8.700-.7z" /></svg>
            </OmniIcons>
          </Omnibox>
          <Slot><GDrop drop="#36786b" hole="#36786b" edge="#fff" /></Slot>
          <Slot>{Ext.r}</Slot>
          <Slot>{Ext.coin}</Slot>
          <Slot>{Ext.ghost}</Slot>
          <Slot>{Ext.fox}</Slot>
          <Slot>{Ext.unicorn}</Slot>
          <Slot>{Ext.puzzle}</Slot>
          <Slot $w={36}><VLine /></Slot>
          <Slot>{Ext.panel}</Slot>
          <Slot $w={36}><VLine /></Slot>
          <Slot>{Ext.download}</Slot>
          <Slot>{Ext.avatar}</Slot>
          <Slot>
            <svg width="8" height="28" viewBox="0 0 8 28" fill="#fff"><circle cx="4" cy="3.200" r="3.100" /><circle cx="4" cy="14" r="3.100" /><circle cx="4" cy="24.800" r="3.100" /></svg>
          </Slot>
        </Toolbar>
      </ToolbarBack>
      <Bookmarks>
        <svg width="28" height="28" viewBox="0 0 28 28" fill="none" stroke="#fff" strokeWidth="3.200"><path d="M1.600 1.600h8.800v8.800H1.600zM17.600 1.600h8.800v8.800h-8.800zM1.600 17.600h8.800v8.800H1.600zM17.600 17.600h8.800v8.800h-8.800z" /></svg>
        <Mark $gap={30}><VLine /></Mark>
        <Mark $gap={32} $w={182} $inner={16}><Folder />Archived</Mark>
        <Mark $gap={0} $w={306} $ls={0.05}><Globe c="#fff" />Claude Code Agen...</Mark>
        <Mark $gap={0} $w={216} $inner={13} $ls={0.15}>
          <svg width="32" height="32" viewBox="0 0 32 32">
            <rect width="32" height="32" rx="2" fill="#3d94dc" />
            <path d="M32 1C14 4 4 12 5.500 20S20 31 32 30" fill="none" stroke="#fff" strokeWidth="1.600" />
            <path d="M30 5C14 7 7 14 9 21c1.500 5 12 7.500 23 7.500V32C12 32 2 26 5 16" fill="none" stroke="#fff" strokeWidth="1.400" />
          </svg>
          TIBA SPARK
        </Mark>
        <Mark $gap={0} $ls={0.2}><Globe c="#fff" />District Editor - Ge...</Mark>
        <PushRight>
          <VLine />
          <Mark $gap={32} $inner={16} $w={208} $ls={0.1}><Folder />All Bookmarks</Mark>
        </PushRight>
      </Bookmarks>

      <Page>
        <Line $h={40} $s={32} $w={700}>Campaign Setup</Line>
        <Line $h={16} $mt={6} $s={10.67} $c="#e3e7f5">Step 7 of 7: Embed Your Form and Start Fundraising</Line>
        <Heading $h={24} $mt={64} $s={18.67} $w={600}><PartyPopper />Campaign Setup Complete!</Heading>
        <Line $h={16} $mt={12} $s={11.73} $c="#d0d6ee">Your contribution form is live and ready to accept donations</Line>
        <Details>
          <Line $h={20} $s={13.33} $w={600} $c="#f0f3fb">Campaign Details</Line>
          <DetailGrid>
            <div>
              <Line $h={14} $s={9.33} $w={700}>Campaign:</Line>
              <Line $h={14} $mt={1} $s={9.33} $c="#d0d6ee">Test</Line>
            </div>
            <div>
              <Line $h={14} $s={9.33} $w={700}>Committee:</Line>
              <Line $h={14} $mt={1} $s={9.33} $c="#d0d6ee">Testy</Line>
            </div>
            <Line $h={14} $s={9.33} $w={700}>Setup by:</Line>
            <Line $h={14} $s={9.33} $w={700}>Campaign ID:</Line>
          </DetailGrid>
        </Details>

        <EmbedHead>
          <Line $h={20} $s={13.33} $w={600}>Your Embed Code</Line>
          <Button $w={99} $bg="#2243ae">Copy Code</Button>
        </EmbedHead>
        <CodeBox>
          {CODE.map(([text, w], i) => (
            <CodeLine key={i}>{w ? <Sel $w={w}>{text}</Sel> : text}</CodeLine>
          ))}
        </CodeBox>

        <Card>
          <Line $h={24} $s={20} $w={700}>QR Code &amp; Testing</Line>
          <Line $h={18} $s={10.67}>Share your donation form via QR code or test it directly:</Line>
          <CardBody>
            <QrCol>
              <QrFrame><QrSvg /></QrFrame>
              <Line $h={14} $mt={15} $s={9.33} $w={500} $c="#3468c4">Scan to Donate</Line>
            </QrCol>
            <UrlCol>
              <Line $h={16} $s={10.67} $w={600} $c="#2b62c4">Donation URL:</Line>
              <UrlBox>
                <div>http://localhost:5173/embed-form.html?campaign=00000000-0000-</div>
                <div>4000-8000-757086555199</div>
              </UrlBox>
              <Row>
                <Button $w={93} $bg="#c5ced5" $fg="#eef2f8">Test Form</Button>
                <Button $w={93} $bg="#52a452">Copy URL</Button>
              </Row>
            </UrlCol>
          </CardBody>
        </Card>
        <Button $w={216} $h={40} $mt={22} $bg="#4f82ef" $fg="#2148b4" $ls={0.27}>GO TO CAMPAIGN DASHBOARD</Button>
        <Button $w={146} $h={33} $mt={21} $bg="#4f82ef" $fg="#2148b4" $ls={0.2}>← BACK TO TERMS</Button>
      </Page>
      <Assistant><GFloat /></Assistant>
    </Screen>
  );
}
